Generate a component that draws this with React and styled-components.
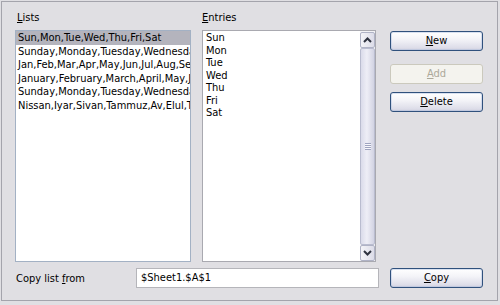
import React from 'react';
import styled, { createGlobalStyle } from 'styled-components';

const Global = createGlobalStyle`
  html, body { margin: 0; padding: 0; background: #e0dfe3; }
  body {
    font-family: "DejaVu Sans Condensed", "DejaVu Sans", sans-serif;
    font-size: 11px;
    color: #000;
  }
`;

const Page = styled.div`
  width: 500px;
  height: 305px;
  box-sizing: border-box;
  padding: 1px 2px 4px 1px;
  background: #e0dfe3;
`;

const Frame = styled.div`
  box-sizing: border-box;
  width: 497px;
  height: 300px;
  border: 1px solid #a4a4ac;
  padding: 9px 0 0 13px;
  display: flex;
  flex-direction: column;
`;

const Top = styled.div`
  display: flex;
  align-items: flex-start;
`;

const Column = styled.div`
  display: flex;
  flex-direction: column;
  width: ${p => p.$w}px;
  margin-left: ${p => p.$ml || 0}px;
`;

const Label = styled.div`
  height: 13px;
  line-height: 13px;
  margin: 0 0 6px ${p => p.$indent || 0}px;
  white-space: nowrap;
`;

const U = styled.span`
  text-decoration: underline;
  text-underline-offset: 1px;
`;

const ListBox = styled.div`
  box-sizing: border-box;
  height: 232px;
  background: #fff;
  border: 1px solid #a3b1c4;
  overflow: hidden;
`;

const ListItem = styled.div`
  height: 13.6px;
  line-height: 13.6px;
  padding-left: 2px;
  white-space: nowrap;
  overflow: hidden;
  background: ${p => (p.$selected ? '#b4b4bd' : 'transparent')};
`;

const EntryBox = styled.div`
  box-sizing: border-box;
  height: 232px;
  background: #fff;
  border: 1px solid #a9a9b0;
  display: flex;
`;

const EntryList = styled.div`
  flex: 1;
  padding: 1px 0 0 3px;
`;

const EntryItem = styled.div`
  height: 12.5px;
  line-height: 12.5px;
`;

const ScrollBar = styled.div`
  width: 15px;
  display: flex;
  flex-direction: column;
  background: #f3f3f6;
  padding: 1px 0 0 0;
`;

const ArrowBtn = styled.div`
  box-sizing: border-box;
  height: 16px;
  border: 1px solid #b0b3c6;
  border-radius: 2px;
  background: linear-gradient(to right, #f4f4f8, #dcdce8);
  display: flex;
  align-items: center;
  justify-content: center;
`;

const Thumb = styled.div`
  flex: 1;
  box-sizing: border-box;
  border: 1px solid #b9bccf;
  border-radius: 2px;
  background: linear-gradient(to right, #dadbea, #eeeef6 45%, #d2d3e3);
  display: flex;
  align-items: center;
  justify-content: center;
`;

const Grip = styled.div`
  width: 6px;
  height: 7px;
  background: repeating-linear-gradient(to bottom, #9fa4bf 0 1px, #f8f8fc 1px 2px);
`;

const Button = styled.button`
  box-sizing: border-box;
  width: 93px;
  height: 20px;
  margin-top: ${p => p.$mt || 0}px;
  padding: 0;
  font: inherit;
  font-size: 11px;
  color: ${p => (p.disabled ? '#aca899' : '#000')};
  border: 1px solid ${p => (p.disabled ? '#cbc9bd' : '#30517d')};
  border-radius: 3px;
  background: ${p =>
    p.disabled
      ? '#f4f3ee'
      : 'linear-gradient(to bottom, #ffffff 0%, #f4f4f8 40%, #dcdce8 90%, #c9c9d8 100%)'};
  box-shadow: ${p => (p.disabled ? 'none' : 'inset 0 0 0 1px rgba(180,195,225,0.5)')};
  line-height: 18px;
`;

const Bottom = styled.div`
  display: flex;
  align-items: center;
  margin-top: 6px;
  height: 20px;
`;

const BottomLabel = styled.div`
  width: 120px;
  padding-left: 1px;
  white-space: nowrap;
`;

const Input = styled.div`
  box-sizing: border-box;
  width: 243px;
  height: 20px;
  line-height: 18px;
  padding-left: 4px;
  background: #fff;
  border: 1px solid #b5b5ba;
`;

const Chevron = ({ down }) => (
  <svg width="9" height="6" viewBox="0 0 9 6">
    <polyline
      points={down ? '1,1 4.5,4.5 8,1' : '1,5 4.5,1.5 8,5'}
      fill="none"
      stroke="#2f3340"
      strokeWidth="2"
    />
  </svg>
);

const lists = [
  'Sun,Mon,Tue,Wed,Thu,Fri,Sat',
  'Sunday,Monday,Tuesday,Wednesday,Thursday,Friday,Saturday',
  'Jan,Feb,Mar,Apr,May,Jun,Jul,Aug,Sep,Oct,Nov,Dec',
  'January,February,March,April,May,June,July,August,September,October,November,December',
  'Sunday,Monday,Tuesday,Wednesday,Thursday,Friday,Shabbat',
  'Nissan,Iyar,Sivan,Tammuz,Av,Elul,Tishri,Heshvan,Kislev,Tevet,Shevat,Adar,Adar B',
];

const entries = ['Sun', 'Mon', 'Tue', 'Wed', 'Thu', 'Fri', 'Sat'];

export default function App() {
  return (
    <>
      <Global />
      <Page>
        <Frame>
          <Top>
            <Column $w={176}>
              <Label $indent={2}>
                <U>L</U>ists
              </Label>
              <ListBox>
                {lists.map((l, i) => (
                  <ListItem key={i} $selected={i === 0}>
                    {l}
                  </ListItem>
                ))}
              </ListBox>
            </Column>
            <Column $w={174} $ml={11}>
              <Label>
                <U>E</U>ntries
              </Label>
              <EntryBox>
                <EntryList>
                  {entries.map(e => (
                    <EntryItem key={e}>{e}</EntryItem>
                  ))}
                </EntryList>
                <ScrollBar>
                  <ArrowBtn>
                    <Chevron />
                  </ArrowBtn>
                  <Thumb>
                    <Grip />
                  </Thumb>
                  <ArrowBtn>
                    <Chevron down />
                  </ArrowBtn>
                </ScrollBar>
              </EntryBox>
            </Column>
            <Column $w={93} $ml={14}>
              <Button $mt={20}>
                <U>N</U>ew
              </Button>
              <Button $mt={13} disabled>
                <U>A</U>dd
              </Button>
              <Button $mt={8}>
                <U>D</U>elete
              </Button>
            </Column>
          </Top>
          <Bottom>
            <BottomLabel>
              Copy list <U>f</U>rom
            </BottomLabel>
            <Input>$Sheet1.$A$1</Input>
            <Button style={{ marginLeft: 11 }}>
              <U>C</U>opy
            </Button>
          </Bottom>
        </Frame>
      </Page>
    </>
  );
}
